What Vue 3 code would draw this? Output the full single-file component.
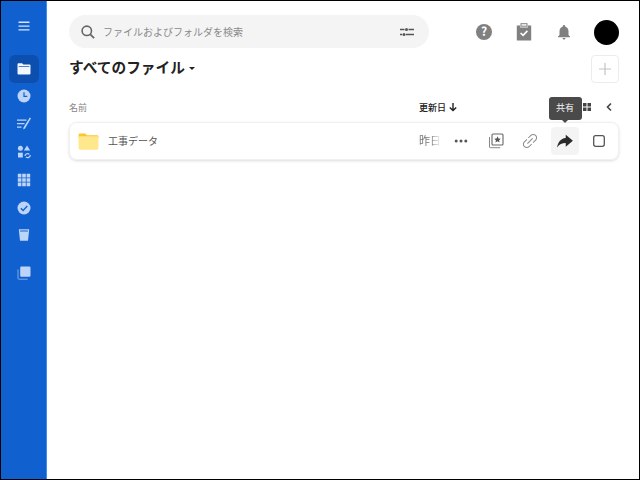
<template>
  <div class="page">
    <nav class="sidebar">
      <button class="side-item menu">
        <svg viewBox="0 0 16 16" width="16" height="16"><path d="M2.500 3.600h11v1.300h-11zM2.500 7.400h11v1.300h-11zM2.500 11.200h11v1.300h-11z" fill="#d3e3fa" /></svg>
      </button>
      <button class="side-item side-item--active">
        <svg viewBox="0 0 16 16" width="16" height="16"><path d="M1.500 3.200c0-.5.400-.9.900-.9h3.700l1.300 1.200h6.200c.5 0 .9.400.9.900v8.200c0 .5-.4.900-.9.900H2.400c-.5 0-.9-.4-.9-.9z" fill="#f2f6fd" /><path d="M2.700 5.300h10.600v.7H2.700z" fill="#1050ad" /></svg>
      </button>
      <button class="side-item">
        <svg viewBox="0 0 16 16" width="16" height="16"><circle cx="8" cy="8" r="6.500" fill="#bcd4f7" /><path d="M8 4.200v4.200h3.300" fill="none" stroke="#1160d0" stroke-width="1.200" /></svg>
      </button>
      <button class="side-item">
        <svg viewBox="0 0 16 16" width="16" height="16"><path d="M1 3.400h9.500v1.300H1zM1 6.900h7.500v1.300H1zM1 10.400h4.500v1.300H1z" fill="#bcd4f7" /><path d="M13.800 1.500l1.200.8-6 10.200-1.700 1 .2-1.900z" fill="#bcd4f7" /></svg>
      </button>
      <button class="side-item">
        <svg viewBox="0 0 16 16" width="16" height="16"><circle cx="4.400" cy="4.200" r="2.500" fill="#bcd4f7" /><path d="M11 1.400l3.100 5.200H7.900z" fill="#bcd4f7" /><rect x="2" y="8.700" width="4.800" height="4.800" fill="#bcd4f7" /><path d="M9 12a2.500 2.500 0 0 1 4.300-1.600M14.300 11a2.500 2.500 0 0 1-4.300 1.800" fill="none" stroke="#bcd4f7" stroke-width="1.200" /></svg>
      </button>
      <button class="side-item">
        <svg viewBox="0 0 16 16" width="16" height="16"><path d="M1.800 1.800h3.600v3.600H1.800zM6.200 1.800h3.600v3.600H6.200zM10.600 1.800h3.600v3.600h-3.600zM1.800 6.200h3.600v3.600H1.800zM6.200 6.200h3.600v3.600H6.200zM10.600 6.200h3.600v3.600h-3.600zM1.800 10.600h3.600v3.600H1.800zM6.200 10.600h3.600v3.600H6.200zM10.600 10.600h3.600v3.600h-3.600z" fill="#bcd4f7" /></svg>
      </button>
      <button class="side-item">
        <svg viewBox="0 0 16 16" width="16" height="16"><circle cx="8" cy="8" r="6.500" fill="#bcd4f7" /><path d="M4.800 8.200l2.300 2.200 4.200-4.300" fill="none" stroke="#1160d0" stroke-width="1.400" /></svg>
      </button>
      <button class="side-item">
        <svg viewBox="0 0 16 16" width="16" height="16"><path d="M2.800 2.300h10.400l-1.200 11.400H4z" fill="#bcd4f7" /><path d="M4 3.600h8l-.1.900H4.100z" fill="#1160d0" /></svg>
      </button>
      <button class="side-item side-item--bottom">
        <svg viewBox="0 0 16 16" width="16" height="16"><rect x="4.200" y="1.500" width="10.300" height="10.300" rx="1.200" fill="#bcd4f7" /><path d="M2 4.500v9c0 .4.300.7.700.7h9" fill="none" stroke="#7ea9e8" stroke-width="1" /></svg>
      </button>
    </nav>

    <main class="content">
      <header class="topbar">
        <div class="search">
          <svg class="search-icon" viewBox="0 0 16 16" width="16" height="16"><circle cx="6.800" cy="6.800" r="4.700" fill="none" stroke="#666" stroke-width="1.600" /><path d="M10.300 10.300l3.800 3.800" stroke="#666" stroke-width="1.800" /></svg>
          <span class="search-text">ファイルおよびフォルダを検索</span>
          <svg viewBox="0 0 14 14" width="14" height="14"><path d="M0 4.500h4.500M8.500 4.500H14M0 9.500h2M6 9.500h8" stroke="#555" stroke-width="1.300" /><circle cx="6.500" cy="4.500" r="1.500" fill="#555" /><circle cx="4" cy="9.500" r="1.500" fill="#555" /></svg>
        </div>
        <div class="top-actions">
          <svg viewBox="0 0 18 18" width="18" height="18"><circle cx="9" cy="9" r="8" fill="#808080" /><text x="9" y="13.200" text-anchor="middle" class="help-mark">?</text></svg>
          <svg viewBox="0 0 18 18" width="18" height="18"><path d="M1.800 2.500h3.400V4.500h7.600V2.500h3.400v15H1.800z" fill="#808080" /><rect x="6" y="0.700" width="6" height="2.500" fill="none" stroke="#808080" stroke-width="1" /><path d="M5.600 10l2.500 2.400 4.300-4.500" fill="none" stroke="#fff" stroke-width="1.600" /></svg>
          <svg viewBox="0 0 24 24" width="18" height="18"><path d="M12 22c1.100 0 2-.9 2-2h-4c0 1.100.9 2 2 2zm6-6v-5c0-3.070-1.630-5.640-4.500-6.320V4c0-.83-.67-1.500-1.500-1.500s-1.500.67-1.500 1.500v.68C7.640 5.360 6 7.920 6 11v5l-2 2v1h16v-1l-2-2z" fill="#808080" /></svg>
          <div class="avatar"></div>
        </div>
      </header>

      <div class="title-row">
        <h1 class="title">すべてのファイル<span class="caret"></span></h1>
        <button class="add-btn">
          <svg viewBox="0 0 14 14" width="14" height="14"><path d="M7 1v12M1 7h12" stroke="#c4c4c4" stroke-width="1.200" /></svg>
        </button>
      </div>

      <div class="list-head">
        <span class="head-name">名前</span>
        <span class="head-date">更新日
          <svg viewBox="0 0 10 10" width="10" height="10"><path d="M5 1v7.500M1.800 5.400L5 8.600l3.200-3.200" fill="none" stroke="#222" stroke-width="1.400" /></svg>
        </span>
        <svg viewBox="0 0 10 10" width="10" height="10"><path d="M1 1h3.500v3.500H1zM5.500 1H9v3.500H5.500zM1 5.500h3.500V9H1zM5.500 5.500H9V9H5.500z" fill="#444" /></svg>
        <svg class="head-back" viewBox="0 0 10 10" width="10" height="10"><path d="M7 1.500L3.500 5 7 8.500" fill="none" stroke="#444" stroke-width="1.600" /></svg>
      </div>

      <div class="file-row">
        <svg class="folder" viewBox="0 0 22 18" width="21" height="17"><path d="M.5 2C.5 1 1.100.4 2 .4h5.500l2 2.100H20c1 0 1.600.6 1.600 1.500v1H.5z" fill="#fcc62d" /><path d="M.5 3.500h21v12.700c0 .9-.6 1.500-1.500 1.500H2c-.9 0-1.500-.6-1.500-1.500z" fill="#ffe78c" /></svg>
        <span class="file-name">工事データ</span>
        <span class="file-date">昨日</span>
        <div class="row-actions">
          <button class="row-btn">
            <svg viewBox="0 0 14 6" width="14" height="6"><circle cx="2.200" cy="3" r="1.500" fill="#555" /><circle cx="7" cy="3" r="1.500" fill="#555" /><circle cx="11.800" cy="3" r="1.500" fill="#555" /></svg>
          </button>
          <button class="row-btn">
            <svg viewBox="0 0 16 16" width="16" height="16"><rect x="4" y="1" width="11" height="11" rx="1" fill="none" stroke="#666" stroke-width="1.100" /><path d="M1.500 4v10c0 .4.300.7.700.7h10" fill="none" stroke="#888" stroke-width="1" /><path d="M9.500 3.300l1 2.200 2.300.2-1.700 1.500.5 2.300-2.100-1.200-2.100 1.200.5-2.300-1.700-1.500 2.300-.2z" fill="#555" /></svg>
          </button>
          <button class="row-btn">
            <svg viewBox="0 0 24 24" width="22" height="22"><path transform="rotate(-45 12 12)" d="M3.900 12c0-1.710 1.390-3.100 3.100-3.100h4V7.800H7c-2.380 0-4.200 1.820-4.200 4.200s1.820 4.200 4.200 4.200h4v-1.100H7c-1.710 0-3.100-1.390-3.100-3.100zM8 12.600h8v-1.200H8zM17 7.800h-4v1.100h4c1.710 0 3.100 1.390 3.100 3.100s-1.390 3.100-3.100 3.100h-4v1.100h4c2.380 0 4.200-1.820 4.200-4.200s-1.820-4.200-4.200-4.200z" fill="#8c8c8c" /></svg>
          </button>
          <div class="share-wrap">
            <div class="tooltip">共有</div>
            <button class="row-btn">
              <svg viewBox="0 0 24 24" width="18" height="18"><path d="M13 3.500l9.500 8-9.500 8v-4.700C8 14.800 4.500 16.500 1.500 20.500 2.500 14 6 8.800 13 8z" fill="#2a2a2a" /></svg>
            </button>
          </div>
          <button class="row-btn row-btn--last">
            <svg viewBox="0 0 14 14" width="14" height="14"><rect x="1.700" y="1.700" width="10.600" height="10.600" rx="2" fill="none" stroke="#555" stroke-width="1.300" /></svg>
          </button>
        </div>
      </div>
    </main>
  </div>
</template>

<script setup>
</script>

<style>
html, body {
  margin: 0;
  background: #fff;
}
</style>

<style scoped>
.page {
  display: flex;
  box-sizing: border-box;
  width: 640px;
  height: 480px;
  border: 1px solid #000;
  font-family: "Noto Sans CJK JP", "Noto Sans", sans-serif;
  overflow: hidden;
}

button {
  display: flex;
  align-items: center;
  justify-content: center;
  padding: 0;
  border: 0;
  background: none;
}

.sidebar {
  display: flex;
  flex-direction: column;
  align-items: center;
  box-sizing: border-box;
  width: 46px;
  flex-shrink: 0;
  padding: 11px 0 0 0;
  background: #1160d0;
  border-right: 1px solid #3e8cf0;
}

.side-item {
  width: 30px;
  height: 27.8px;
  border-radius: 6px;
}

.menu {
  margin-bottom: 15px;
}

.side-item--active {
  background: #0d4fae;
}

.side-item--bottom {
  margin-top: 10px;
}

.content {
  flex: 1;
  display: flex;
  flex-direction: column;
  min-width: 0;
  padding: 14px 20px 0 22px;
}

.topbar {
  display: flex;
  align-items: center;
  height: 33px;
}

.search {
  display: flex;
  align-items: center;
  flex-shrink: 0;
  box-sizing: border-box;
  width: 360px;
  height: 33px;
  padding: 0 15px 0 11px;
  border-radius: 17px;
  background: #f4f4f4;
}

.search-icon {
  margin-right: 7px;
}

.search-text {
  flex: 1;
  margin-top: -1px;
  font-size: 10px;
  color: #8a8a8a;
}

.top-actions {
  display: flex;
  align-items: center;
  gap: 22px;
  margin-left: 46px;
}

.avatar {
  width: 25px;
  height: 25px;
  margin: 2px 0 0 -1px;
  border-radius: 50%;
  background: #000;
}

.title-row {
  display: flex;
  align-items: center;
  justify-content: space-between;
  height: 28px;
  margin-top: 7px;
}

.title {
  display: flex;
  align-items: center;
  margin: -5px 0 0 0;
  font-size: 14.700px;
  font-weight: 700;
  color: #222;
}

.caret {
  margin: 3px 0 0 4px;
  border: 3px solid transparent;
  border-top: 3px solid #222;
  border-bottom: 0;
}

.add-btn {
  box-sizing: border-box;
  width: 28px;
  height: 28px;
  border: 1px solid #ececec;
  border-radius: 4px;
  background: #fff;
}

.list-head {
  display: flex;
  align-items: center;
  height: 16px;
  margin-top: 16px;
  font-size: 9px;
}

.head-name {
  width: 350px;
  color: #888;
}

.head-date {
  display: flex;
  align-items: center;
  gap: 2px;
  width: 163px;
  font-weight: 500;
  color: #222;
}

.head-back {
  margin-left: 12px;
}

.file-row {
  display: flex;
  align-items: center;
  box-sizing: border-box;
  width: 550px;
  height: 38px;
  margin-top: 7px;
  padding-left: 8px;
  border: 1px solid #f0f0f0;
  border-radius: 8px;
  box-shadow: 0 1px 3px rgba(0, 0, 0, 0.14);
}

.folder {
  flex-shrink: 0;
}

.file-name {
  width: 311px;
  margin: -2px 0 0 9px;
  font-size: 10px;
  color: #555;
}

.file-date {
  width: 28px;
  margin-top: -2px;
  font-size: 11px;
  color: #777;
  mask-image: linear-gradient(to right, #000 40%, transparent 80%);
}

.row-actions {
  display: flex;
  align-items: center;
  flex-shrink: 0;
}

.row-btn {
  width: 28px;
  height: 28px;
  margin-right: 6.500px;
  border-radius: 4px;
}

.row-btn--last {
  margin-right: 0;
}

.share-wrap .row-btn {
  background: #f4f4f4;
}

.share-wrap {
  position: relative;
}

.tooltip {
  position: absolute;
  left: -2px;
  top: -30px;
  width: 33px;
  height: 23px;
  line-height: 21px;
  text-align: center;
  border-radius: 3px;
  background: #4a4a4a;
  color: #f4f4f4;
  font-size: 9px;
}

.tooltip::after {
  content: "";
  position: absolute;
  left: 13px;
  bottom: -3px;
  border: 3.500px solid transparent;
  border-top: 3px solid #4a4a4a;
  border-bottom: 0;
}

.help-mark {
  font-size: 12px;
  font-weight: 700;
  fill: #fff;
}
</style>
